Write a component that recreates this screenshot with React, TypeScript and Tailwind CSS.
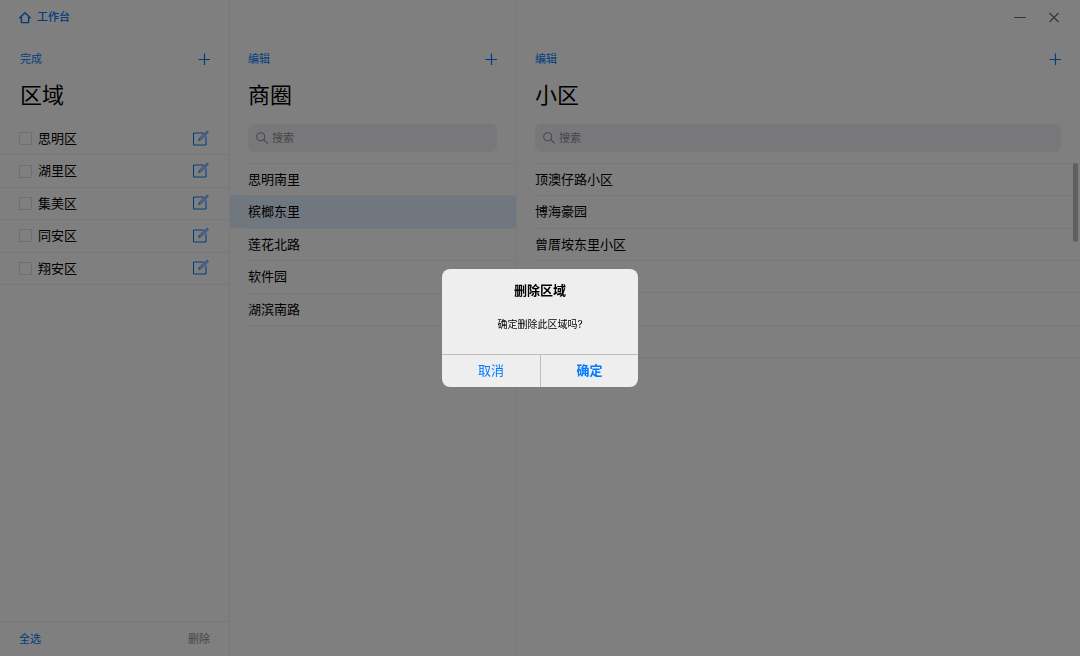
import React, { useState } from "react";

interface Region {
  id: number;
  name: string;
}

const regions: Region[] = [
  { id: 1, name: "思明区" },
  { id: 2, name: "湖里区" },
  { id: 3, name: "集美区" },
  { id: 4, name: "同安区" },
  { id: 5, name: "翔安区" },
];

const districts = ["思明南里", "槟榔东里", "莲花北路", "软件园", "湖滨南路"];

const communities = ["顶澳仔路小区", "博海豪园", "曾厝垵东里小区", "", "", ""];

const HomeIcon = () => (
  <svg
    className="h-3 w-3"
    viewBox="0 0 12 12"
    fill="none"
    stroke="currentColor"
    strokeWidth="1.4"
    strokeLinejoin="round"
    strokeLinecap="round"
  >
    <path d="M6 0.8 0.8 5.8H2.4V10.6H9.6V5.8H11.2Z" />
  </svg>
);

const PlusIcon = () => (
  <svg
    className="h-3 w-3"
    viewBox="0 0 12 12"
    stroke="currentColor"
    strokeWidth="1.2"
  >
    <path d="M6.5 0.5V12M0.5 6.5H12" />
  </svg>
);

const EditIcon = () => (
  <svg
    className="h-4 w-4"
    viewBox="0 0 16 16"
    fill="none"
    stroke="currentColor"
    strokeWidth="1"
  >
    <path d="M10.5 2H0.5V14H13V5.5" />
    <path
      d="M5.6 9.4 6.6 7 11.9 1.9 13.4 3.4 8 8.6Z"
      fill="currentColor"
      fillOpacity="0.25"
      strokeWidth="0.8"
    />
    <path d="M13 1.2 14 0.3 15.3 1.5 14.4 2.5Z" strokeWidth="0.9" />
  </svg>
);

const SearchIcon = () => (
  <svg
    className="h-3 w-3 shrink-0"
    viewBox="0 0 12 12"
    fill="none"
    stroke="currentColor"
    strokeWidth="1.1"
    strokeLinecap="round"
  >
    <circle cx="4.7" cy="4.7" r="4" />
    <path d="M7.7 7.7 11.4 11.2" />
  </svg>
);

interface ColumnHeadProps {
  action: string;
  title: string;
}

const ColumnHead: React.FC<ColumnHeadProps> = ({ action, title }) => (
  <>
    <div className="flex h-12 items-center justify-between text-[11px] text-[#007aff]">
      <button type="button">{action}</button>
      <button type="button" aria-label={`新增${title}`}>
        <PlusIcon />
      </button>
    </div>
    <h2 className="text-[22px] leading-6">{title}</h2>
  </>
);

const SearchBox: React.FC<{ label: string }> = ({ label }) => {
  const [value, setValue] = useState("");

  return (
    <label className="mt-[17px] flex h-7 items-center gap-1 rounded-md bg-[#f0f0f5] pl-2 text-[#8e8e93]">
      <SearchIcon />
      <input
        type="text"
        aria-label={label}
        placeholder="搜索"
        value={value}
        onChange={(e) => setValue(e.target.value)}
        className="w-full min-w-0 bg-transparent text-[11px] text-black outline-none placeholder:text-[#8e8e93]"
      />
    </label>
  );
};

const App: React.FC = () => {
  const [checked, setChecked] = useState<number[]>([]);
  const [selected, setSelected] = useState("槟榔东里");
  const [dialogOpen, setDialogOpen] = useState(true);

  const toggle = (id: number) => {
    setChecked((prev) =>
      prev.includes(id) ? prev.filter((item) => item !== id) : [...prev, id]
    );
  };

  return (
    <div className="flex min-h-screen bg-white font-['Inter','Noto_Sans_CJK_SC',sans-serif] text-[13px] text-black">
      <aside className="flex w-[230px] shrink-0 flex-col border-r border-[#f0f0f0]">
        <a
          href="#"
          className="flex h-[35px] items-center gap-[6px] pl-[19px] text-[11px] font-medium text-[#007aff]"
        >
          <HomeIcon />
          工作台
        </a>
        <div className="pl-5 pr-[19px]">
          <ColumnHead action="完成" title="区域" />
        </div>
        <ul className="mt-4 grid h-[162px] grid-rows-5">
          {regions.map((region) => (
            <li
              key={region.id}
              className="flex items-center justify-between border-b border-[#f0f0f0] pl-[19px] pr-5"
            >
              <label className="flex items-center gap-[6px]">
                <input
                  type="checkbox"
                  checked={checked.includes(region.id)}
                  onChange={() => toggle(region.id)}
                  className="h-[13px] w-[13px] appearance-none rounded-[1px] border border-[#dedede] checked:bg-[#007aff]"
                />
                {region.name}
              </label>
              <button
                type="button"
                aria-label={`编辑${region.name}`}
                className="text-[#007aff]"
              >
                <EditIcon />
              </button>
            </li>
          ))}
        </ul>
        <div className="mt-auto flex h-[35px] items-center justify-between border-t border-[#f0f0f0] px-[19px] text-[11px]">
          <button type="button" className="text-[#007aff]">
            全选
          </button>
          <button
            type="button"
            onClick={() => setDialogOpen(true)}
            className="text-[#8e8e93]"
          >
            删除
          </button>
        </div>
      </aside>

      <section className="w-[287px] shrink-0 border-r border-[#f0f0f0] pt-[35px]">
        <div className="pl-[18px] pr-[19px]">
          <ColumnHead action="编辑" title="商圈" />
          <SearchBox label="搜索商圈" />
        </div>
        <div className="mt-[11px] grid h-[162px] grid-rows-5">
          {districts.map((name) => (
            <button
              type="button"
              key={name}
              onClick={() => setSelected(name)}
              className={`flex pl-[18px] text-left ${
                selected === name ? "bg-[#e2efff]" : ""
              }`}
            >
              <span className="flex h-full w-full items-center border-t border-[#f0f0f0]">
                {name}
              </span>
            </button>
          ))}
        </div>
        <div className="ml-[18px] border-t border-[#f0f0f0]" />
      </section>

      <section className="min-w-0 flex-1">
        <div className="flex h-[35px] items-center justify-end gap-[22px] pr-5 text-[#6e6e6e]">
          <button type="button" aria-label="最小化">
            <svg className="h-3 w-3" viewBox="0 0 12 12" stroke="currentColor">
              <path d="M0 5.5H12" />
            </svg>
          </button>
          <button type="button" aria-label="关闭">
            <svg
              className="h-3 w-3"
              viewBox="0 0 12 12"
              stroke="currentColor"
              strokeWidth="1.2"
            >
              <path d="M1.5 1 10.5 10M10.5 1 1.5 10" />
            </svg>
          </button>
        </div>
        <div className="pl-[18px] pr-[19px]">
          <ColumnHead action="编辑" title="小区" />
          <SearchBox label="搜索小区" />
        </div>
        <div className="relative mt-[11px] pl-[18px]">
          <ul className="grid h-[195px] grid-rows-6 border-b border-[#f0f0f0]">
            {communities.map((name, index) => (
              <li
                key={index}
                className="flex items-center border-t border-[#f0f0f0]"
              >
                {name}
              </li>
            ))}
          </ul>
          <div className="absolute right-[2px] top-0 h-[79px] w-[5px] rounded-full bg-[#bfbfbf]" />
        </div>
      </section>

      {dialogOpen && (
        <div className="fixed inset-0 flex items-center justify-center bg-black/50">
          <div
            role="dialog"
            aria-modal="true"
            aria-labelledby="dialog-title"
            className="w-[196px] overflow-hidden rounded-lg bg-[#eeeeee] text-center"
          >
            <h3
              id="dialog-title"
              className="pt-[11px] text-[13px] font-semibold leading-5"
            >
              删除区域
            </h3>
            <p className="pb-[22px] pt-4 text-[10px] leading-4">
              确定删除此区域吗?
            </p>
            <div className="grid h-[33px] grid-cols-2 border-t border-[#bfbfbf] text-[#007aff]">
              <button type="button" onClick={() => setDialogOpen(false)}>
                取消
              </button>
              <button
                type="button"
                onClick={() => setDialogOpen(false)}
                className="border-l border-[#bfbfbf] font-semibold"
              >
                确定
              </button>
            </div>
          </div>
        </div>
      )}
    </div>
  );
};

export default App;
